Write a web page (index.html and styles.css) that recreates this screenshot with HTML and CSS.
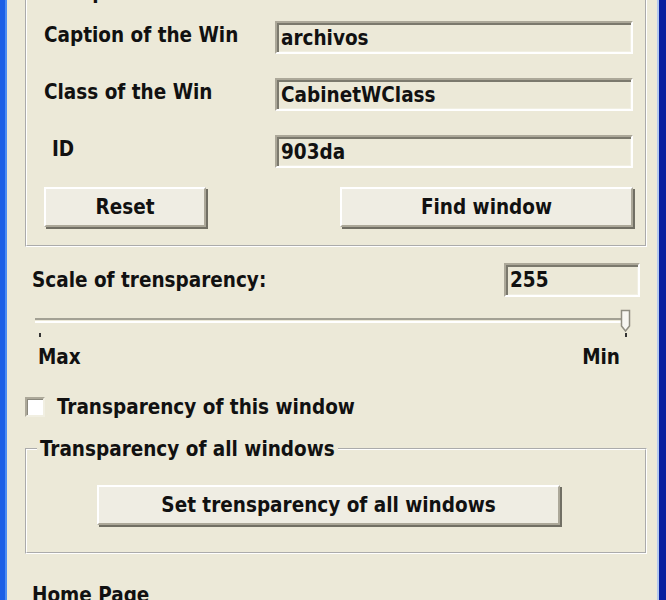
FILE: index.html
```html
<!DOCTYPE html>
<html lang="en">
<head>
    <meta charset="UTF-8">
    <meta name="viewport" content="width=device-width, initial-scale=1.0">
    <title>Transparency</title>
    <link rel="stylesheet" href="styles.css">
</head>
<body>
    <div class="dialog">
        <fieldset class="group group-props">
            <legend>Properties of the window</legend>
            <div class="fields">
                <label class="field-label" for="caption">Caption of the Win</label>
                <input class="edit" id="caption" type="text" value="archivos" readonly>
                <label class="field-label" for="winclass">Class of the Win</label>
                <input class="edit" id="winclass" type="text" value="CabinetWClass" readonly>
                <label class="field-label field-id" for="winid">ID</label>
                <input class="edit" id="winid" type="text" value="903da" readonly>
            </div>
            <div class="actions">
                <button class="btn btn-reset">Reset</button>
                <button class="btn btn-find">Find window</button>
            </div>
        </fieldset>

        <div class="scale-row">
            <label for="scale">Scale of trensparency:</label>
            <input class="edit edit-scale" id="scale" type="text" value="255">
        </div>

        <div class="slider">
            <div class="track"></div>
            <svg class="thumb" width="11" height="24" viewBox="0 0 11 24">
                <path d="M1.5 1.5 H9.5 V17 L5.5 22 L1.5 17 Z" fill="#f7f6f1" stroke="#8f8d81" stroke-width="1.5"/>
            </svg>
            <span class="tick tick-max"></span>
            <span class="tick tick-min"></span>
        </div>
        <div class="slider-labels">
            <span>Max</span>
            <span>Min</span>
        </div>

        <label class="check-row">
            <input type="checkbox" class="check">
            Transparency of this window
        </label>

        <fieldset class="group group-all">
            <legend>Transparency of all windows</legend>
            <button class="btn btn-all">Set trensparency of all windows</button>
        </fieldset>

        <div class="home">Home Page</div>
    </div>
</body>
</html>
```

FILE: styles.css
```css
html, body {
    margin: 0;
    height: 100%;
    overflow: hidden;
}
body {
    background-color: #ece9d8;
    color: #111;
    font-family: "DejaVu Sans Condensed", "DejaVu Sans", sans-serif;
    font-stretch: condensed;
    font-weight: bold;
    font-size: 20.5px;
    line-height: 24px;
}
.dialog {
    display: flow-root;
    height: 600px;
    box-sizing: border-box;
    padding: 0 12px 0 20px;
    border-left: 5px solid #1b5fe6;
    border-right: 7px solid #0a1f9e;
    box-shadow: inset 2px 0 0 #4b8cf2, inset -2px 0 0 #b3c8ee;
}

/* group boxes */
.group {
    margin: 0;
    padding: 0;
    min-inline-size: 0;
    border: 2px groove #fff;
}
.group legend {
    padding: 0 3px;
    margin-left: 10px;
}
.group-props {
    margin-top: -20px;
    padding: 17px 10px 18px 17px;
}
.group-all {
    margin-top: 18px;
    padding: 24px 0 27px 0;
}

.fields {
    display: grid;
    grid-template-columns: 231px 358px;
    row-gap: 24px;
}
.field-label {
    align-self: start;
    padding-top: 2px;
}
.field-id {
    padding-left: 8px;
}

/* sunken edit boxes */
.edit {
    box-sizing: border-box;
    height: 33px;
    margin: 0;
    padding: 0 4px;
    font: inherit;
    color: inherit;
    background-color: #ece9d8;
    border: 2px solid;
    border-color: #aca899 #fff #fff #aca899;
    box-shadow: inset 2px 2px 0 #7b796d, inset -1px -1px 0 #f1efe2;
    outline: none;
}
.edit-scale {
    width: 136px;
    height: 34px;
}

/* raised buttons */
.btn {
    box-sizing: border-box;
    height: 40px;
    margin: 0;
    padding: 0;
    font: inherit;
    color: inherit;
    background-color: #efede3;
    border: 2px solid;
    border-color: #fff #aca899 #aca899 #fff;
    box-shadow: 2px 2px 0 #716f64;
    cursor: pointer;
}
.actions {
    display: flex;
    justify-content: space-between;
    margin-top: 19px;
    padding-right: 2px;
}
.btn-reset {
    width: 162px;
}
.btn-find {
    width: 293px;
}
.btn-all {
    width: 463px;
    margin-left: 70px;
}

.scale-row {
    display: flex;
    align-items: center;
    justify-content: space-between;
    margin: 16px 7px 0 7px;
}

/* trackbar */
.slider {
    position: relative;
    box-sizing: border-box;
    height: 30px;
    padding-top: 11px;
    margin: 10px 16px 0 10px;
}
.track {
    margin-right: 3px;
    height: 1px;
    border-top: 2px solid #a3a194;
    border-bottom: 2px solid #fff;
}
.thumb {
    position: absolute;
    right: 0;
    top: 2px;
}
.tick {
    position: absolute;
    top: 26px;
    width: 2px;
    height: 4px;
    background-color: #333;
}
.tick-max {
    left: 4px;
}
.tick-min {
    right: 4px;
}
.slider-labels {
    display: flex;
    justify-content: space-between;
    margin: 8px 27px 0 13px;
}

.check-row {
    display: flex;
    align-items: center;
    gap: 12px;
    margin-top: 26px;
}
.check {
    appearance: none;
    box-sizing: border-box;
    width: 20px;
    height: 20px;
    margin: 0;
    background-color: #fff;
    border: 2px solid;
    border-color: #aca899 #f1efe2 #f1efe2 #aca899;
    box-shadow: inset 1px 1px 0 #8a887c;
}

.home {
    margin: 29px 0 0 7px;
}
```
